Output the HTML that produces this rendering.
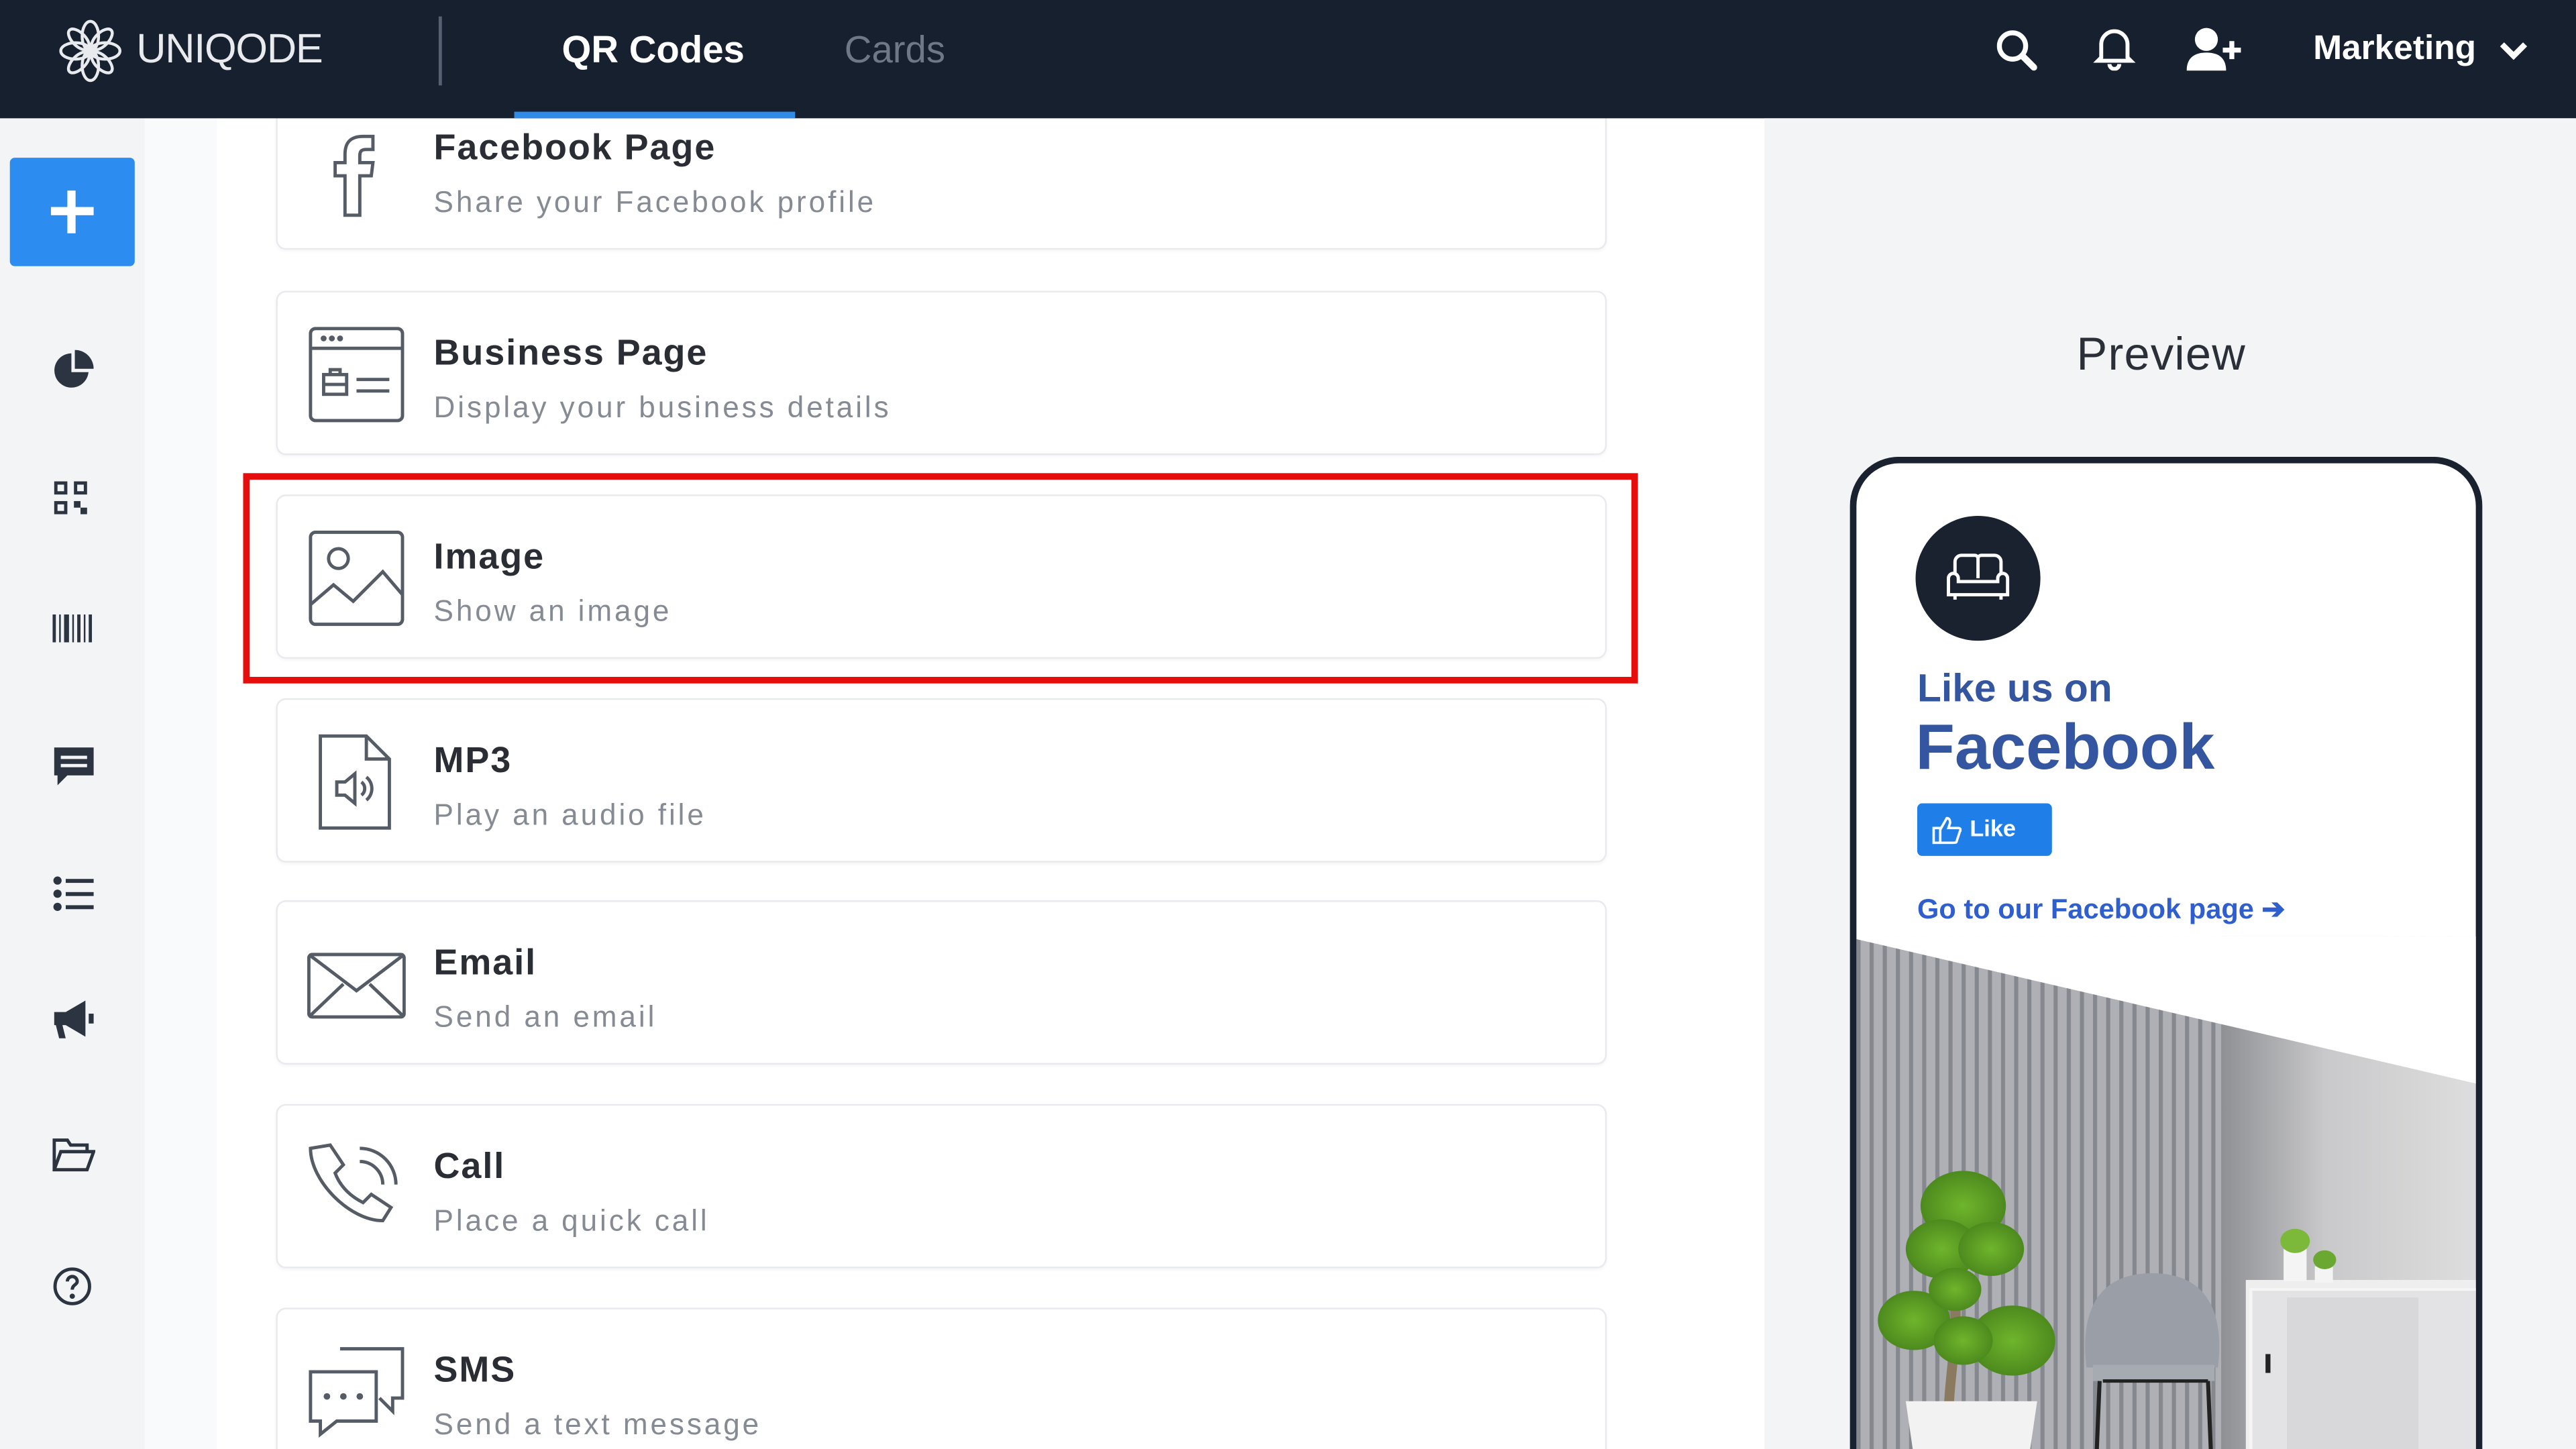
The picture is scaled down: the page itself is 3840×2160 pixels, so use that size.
<!DOCTYPE html>
<html><head><meta charset="utf-8"><style>
*{margin:0;padding:0;box-sizing:border-box}
html,body{width:3840px;height:2160px;overflow:hidden;background:#fff;font-family:"Liberation Sans",sans-serif}
#s{position:absolute;left:0;top:0;width:1568px;height:882px;transform:scale(2.449);transform-origin:0 0;overflow:hidden;background:#fff}
.a{position:absolute}
.hdr{left:0;top:0;width:1568px;height:72px;background:#17202e}
.card{position:absolute;left:168px;width:810px;height:100px;border:1px solid #e8eaee;border-radius:6px;background:#fff;box-shadow:0 1px 2px rgba(0,0,0,.04)}
.card .t{position:absolute;left:95px;top:24px;font-size:22px;font-weight:bold;color:#2a2d33;letter-spacing:.8px}
.card .d{position:absolute;left:95px;top:60px;font-size:18px;color:#858a93;letter-spacing:1.6px}
.card svg{position:absolute;left:18px;top:20px}
.si{position:absolute;left:32px}
</style></head><body><div id="s">
<!-- sidebar -->
<div class="a" style="left:0;top:72px;width:88px;height:810px;background:#f3f4f6"></div>
<div class="a" style="left:88px;top:72px;width:44px;height:810px;background:#f9fafb"></div>
<div class="a" style="left:6px;top:96px;width:76px;height:66px;background:#2d8cf0;border-radius:3px"></div>
<div class="a" style="left:31px;top:126px;width:26px;height:5px;background:#fff"></div>
<div class="a" style="left:41px;top:116px;width:5px;height:26px;background:#fff"></div>
<svg class="si" style="top:213px" width="25" height="25" viewBox="0 0 24 24" fill="#2b3440"><path d="M11 2A10 10 0 1021 13H11z"/><path d="M13 0v11h11A11 11 0 0013 0z"/></svg>
<svg class="si" style="top:292px" width="22" height="22" viewBox="0 0 22 22" fill="#2b3440"><rect x="1" y="1" width="8" height="8"/><rect x="13" y="1" width="8" height="8"/><rect x="1" y="13" width="8" height="8"/><rect x="13" y="13" width="4" height="4"/><rect x="17" y="17" width="4" height="4"/><rect x="3" y="3" width="4" height="4" fill="#f3f4f6"/><rect x="15" y="3" width="4" height="4" fill="#f3f4f6"/><rect x="3" y="15" width="4" height="4" fill="#f3f4f6"/></svg>
<svg class="si" style="top:374px" width="24" height="17" viewBox="0 0 24 17" fill="#2b3440"><rect x="0" y="0" width="2" height="17"/><rect x="4" y="0" width="1" height="17"/><rect x="7" y="0" width="3" height="17"/><rect x="12" y="0" width="1" height="17"/><rect x="15" y="0" width="2" height="17"/><rect x="19" y="0" width="1" height="17"/><rect x="22" y="0" width="2" height="17"/></svg>
<svg class="si" style="top:453px" width="26" height="26" viewBox="0 0 26 26" fill="#2b3440"><path d="M1 2h24v17H9l-6 6v-6H1z"/><rect x="5" y="7" width="16" height="2" fill="#f3f4f6"/><rect x="5" y="12" width="16" height="2" fill="#f3f4f6"/></svg>
<svg class="si" style="top:533px" width="26" height="22" viewBox="0 0 26 22" fill="#2b3440"><circle cx="3" cy="3" r="2.5"/><circle cx="3" cy="11" r="2.5"/><circle cx="3" cy="19" r="2.5"/><rect x="8" y="2" width="17" height="2.4"/><rect x="8" y="10" width="17" height="2.4"/><rect x="8" y="18" width="17" height="2.4"/></svg>
<svg class="si" style="top:608px" width="26" height="26" viewBox="0 0 26 26" fill="#2b3440"><path d="M1 8h7l12-7v22L8 16H6l2 8H4L2 16H1z"/><rect x="22" y="9" width="3" height="6"/></svg>
<svg class="si" style="top:692px" width="26" height="22" viewBox="0 0 26 22" fill="none" stroke="#2b3440" stroke-width="2"><path d="M1 20V2h8l2 3h10v4"/><path d="M1 20l4-11h20l-4 11z"/></svg>
<svg class="si" style="top:771px" width="24" height="24" viewBox="0 0 24 24" fill="none" stroke="#2b3440" stroke-width="2"><circle cx="12" cy="12" r="10.5"/><path d="M9 9a3 3 0 116 0c0 2-3 2-3 5"/><circle cx="12" cy="18" r=".6" fill="#2b3440"/></svg>
<!-- cards -->
<div class="card" style="top:52px"><svg width="60" height="60" viewBox="0 0 60 60" fill="none" stroke="#555c66" stroke-width="2" style="top:22px"><path d="M34 8c-8 0-11 4-11 11v5h-6v8h6v24h9V32h7l1-8h-8v-4c0-3 1-4 4-4h4V8z"/></svg><div class="t">Facebook Page</div><div class="d">Share your Facebook profile</div></div>
<div class="card" style="top:177px"><svg width="60" height="60" viewBox="0 0 60 60" fill="none" stroke="#555c66" stroke-width="2"><rect x="2" y="2" width="56" height="56" rx="3"/><path d="M2 14h56"/><circle cx="10" cy="8" r=".8" fill="#555c66"/><circle cx="15" cy="8" r=".8" fill="#555c66"/><circle cx="20" cy="8" r=".8" fill="#555c66"/><rect x="10" y="30" width="14" height="12"/><path d="M14 30v-3h6v3M10 36h14M30 33h20M30 40h20"/></svg><div class="t">Business Page</div><div class="d">Display your business details</div></div>
<div class="card" style="top:301px"><svg width="60" height="60" viewBox="0 0 60 60" fill="none" stroke="#555c66" stroke-width="2"><rect x="2" y="2" width="56" height="56" rx="3"/><circle cx="19" cy="18" r="6"/><path d="M2 46l14-12 12 10 18-18 12 14"/></svg><div class="t">Image</div><div class="d">Show an image</div></div>
<div class="card" style="top:425px"><svg width="60" height="60" viewBox="0 0 60 60" fill="none" stroke="#555c66" stroke-width="2"><path d="M8 2h28l14 14v42H8z"/><path d="M36 2v14h14"/><path d="M18 30h5l6-5v18l-6-5h-5z"/><path d="M33 30a5 5 0 010 8M36 27a9 9 0 010 14"/></svg><div class="t">MP3</div><div class="d">Play an audio file</div></div>
<div class="card" style="top:548px"><svg width="60" height="60" viewBox="0 0 60 60" fill="none" stroke="#555c66" stroke-width="2"><rect x="1" y="12" width="58" height="38" rx="2"/><path d="M1 12l29 22 29-22M1 50l21-20M59 50L38 30"/></svg><div class="t">Email</div><div class="d">Send an email</div></div>
<div class="card" style="top:672px"><svg width="60" height="60" viewBox="0 0 60 60" fill="none" stroke="#555c66" stroke-width="2"><path d="M14 4l8 12-5 5c3 8 9 14 17 18l5-5 12 8-5 8c-20 0-44-24-44-44z"/><path d="M32 14a14 14 0 0114 14M32 6a22 22 0 0122 22"/></svg><div class="t">Call</div><div class="d">Place a quick call</div></div>
<div class="card" style="top:796px"><svg width="60" height="60" viewBox="0 0 60 60" fill="none" stroke="#555c66" stroke-width="2"><path d="M20 4h38v30h-6v8l-8-8"/><path d="M2 18h40v30H18l-10 8v-8H2z"/><circle cx="12" cy="33" r="1" fill="#555c66"/><circle cx="22" cy="33" r="1" fill="#555c66"/><circle cx="32" cy="33" r="1" fill="#555c66"/></svg><div class="t">SMS</div><div class="d">Send a text message</div></div>
<div class="a" style="left:148px;top:288px;width:849px;height:128px;border:4px solid #e60d0d"></div>
<!-- header -->
<div class="a hdr"></div>
<svg class="a" style="left:36px;top:12px" width="38" height="38" viewBox="0 0 38 38" fill="none" stroke="#e8eaee" stroke-width="1.8">
<ellipse cx="19" cy="10" rx="5" ry="9"/><ellipse cx="19" cy="28" rx="5" ry="9"/><ellipse cx="10" cy="19" rx="9" ry="5"/><ellipse cx="28" cy="19" rx="9" ry="5"/><ellipse cx="12" cy="12" rx="4" ry="8" transform="rotate(-45 12 12)"/><ellipse cx="26" cy="26" rx="4" ry="8" transform="rotate(-45 26 26)"/><ellipse cx="26" cy="12" rx="4" ry="8" transform="rotate(45 26 12)"/><ellipse cx="12" cy="26" rx="4" ry="8" transform="rotate(45 12 26)"/></svg>
<div class="a" style="left:83px;top:16px;font-size:25px;color:#e8eaee;letter-spacing:-.5px">UNIQODE</div>
<div class="a" style="left:267px;top:10px;width:2px;height:42px;background:#556070"></div>
<div class="a" style="left:342px;top:17px;font-size:23px;font-weight:bold;color:#fff">QR Codes</div>
<div class="a" style="left:313px;top:68px;width:171px;height:4px;background:#2f8ae8"></div>
<div class="a" style="left:514px;top:17px;font-size:23px;color:#6f7887">Cards</div>
<svg class="a" style="left:1214px;top:17px" width="28" height="28" viewBox="0 0 28 28"><circle cx="11" cy="11" r="8" fill="none" stroke="#fff" stroke-width="3"/><path d="M17 17l7 7" stroke="#fff" stroke-width="4" stroke-linecap="round"/></svg>
<svg class="a" style="left:1274px;top:15px" width="26" height="28" viewBox="0 0 26 28" fill="none" stroke="#fff" stroke-width="2.4"><path d="M5 20V12a8 8 0 0116 0v8l2 2H3z"/><path d="M10 24a3 3 0 006 0"/></svg>
<svg class="a" style="left:1331px;top:16px" width="34" height="28" viewBox="0 0 34 28" fill="#fff"><circle cx="12" cy="8" r="7"/><path d="M0 27c0-8 5-11 12-11s12 3 12 11z"/><path d="M26 9h3v4h4v3h-4v4h-3v-4h-4v-3h4z"/></svg>
<div class="a" style="left:1408px;top:18px;font-size:21px;font-weight:bold;color:#fff">Marketing</div>
<svg class="a" style="left:1520px;top:23px" width="20" height="16" viewBox="0 0 20 16"><path d="M3 4l7 7 7-7" stroke="#fff" stroke-width="3.5" fill="none"/></svg>
<!-- preview -->
<div class="a" style="left:1074px;top:72px;width:494px;height:810px;background:#f3f4f6"></div>
<div class="a" style="left:1264px;top:200px;font-size:28px;color:#2b3038;letter-spacing:.5px">Preview</div>
<div class="a" style="left:1126px;top:278px;width:385px;height:604px;border:4px solid #1a2230;border-bottom:none;border-radius:30px 30px 0 0;background:#fff;overflow:hidden">
 <div class="a" style="left:36px;top:32px;width:76px;height:76px;border-radius:50%;background:#1a2230"></div>
 <svg class="a" style="left:54px;top:54px" width="40" height="32" viewBox="0 0 40 32" fill="none" stroke="#fff" stroke-width="2"><path d="M6 14V6a4 4 0 014-4h8a2 2 0 012 2v12M20 16V4a2 2 0 012-2h8a4 4 0 014 4v8"/><path d="M2 16a3 3 0 016 0v2h24v-2a3 3 0 016 0v10H2z"/><path d="M6 26v3M34 26v3"/></svg>
 <div class="a" style="left:37px;top:124px;font-size:24px;font-weight:bold;color:#34559f">Like us on</div>
 <div class="a" style="left:36px;top:152px;font-size:39px;font-weight:bold;color:#34559f">Facebook</div>
 <div class="a" style="left:37px;top:207px;width:82px;height:32px;background:#1f7ee8;border-radius:3px"></div>
 <svg class="a" style="left:46px;top:215px" width="18" height="17" viewBox="0 0 18 17" fill="none" stroke="#fff" stroke-width="1.5"><path d="M1 7h4v9H1zM5 8l4-7c2 0 2 2 2 3l-1 3h6c1 0 2 1 1 2l-2 6c0 1-1 1-2 1H5"/></svg>
 <div class="a" style="left:69px;top:214px;font-size:14px;font-weight:bold;color:#fff">Like</div>
 <div class="a" style="left:37px;top:262px;font-size:17px;font-weight:bold;color:#2f5fcf">Go to our Facebook page ➔</div>
 <svg class="a" style="left:0;top:288px" width="380" height="320" viewBox="0 0 380 320">
  <defs><pattern id="p" width="8" height="10" patternUnits="userSpaceOnUse"><rect width="8" height="10" fill="#aeb0b5"/><rect width="2.5" height="10" fill="#85888e"/></pattern>
  <linearGradient id="g" x1="0" x2="1"><stop offset="0" stop-color="#8f9094"/><stop offset=".4" stop-color="#c9c9cb"/><stop offset="1" stop-color="#dedede"/></linearGradient>
  <radialGradient id="lf"><stop offset="0" stop-color="#6fb52c"/><stop offset="1" stop-color="#4d8a1e"/></radialGradient></defs>
  <rect width="380" height="320" fill="url(#p)"/>
  <rect x="222" width="158" height="320" fill="url(#g)"/>
  <g transform="scale(1 0.82)">
  <path d="M0 0H380V110L0 2z" fill="#fff"/>
  <rect x="237" y="255" width="143" height="160" fill="#eeeeef"/>
  <rect x="240" y="262" width="140" height="150" fill="#e3e3e5" stroke="#f5f5f5" stroke-width="2"/>
  <rect x="262" y="268" width="80" height="140" fill="#d8d8db"/>
  <rect x="249" y="310" width="3" height="14" fill="#222"/>
  <path d="M260 232h14v24h-14z" fill="#f4f4f4"/><circle cx="267" cy="226" r="9" fill="#7cb83a"/>
  <path d="M279 245h11v12h-11z" fill="#f4f4f4"/><circle cx="285" cy="240" r="7" fill="#6aa831"/>
  <path d="M140 320c-4-40 6-70 40-70s44 30 40 70z" fill="#9a9ea6"/>
  <path d="M144 318h74v12h-74z" fill="#a6aab1"/>
  <path d="M148 330l-2 60M214 330l2 60M150 330h64" stroke="#222" stroke-width="2.5"/>
  <path d="M56 360c0-40 10-80 0-120" stroke="#8a7a60" stroke-width="6" fill="none"/>
  <circle cx="65" cy="200" r="26" fill="url(#lf)"/><circle cx="52" cy="232" r="22" fill="url(#lf)"/><circle cx="82" cy="232" r="20" fill="url(#lf)"/>
  <circle cx="35" cy="285" r="22" fill="url(#lf)"/><circle cx="95" cy="300" r="26" fill="url(#lf)"/><circle cx="65" cy="300" r="18" fill="url(#lf)"/><circle cx="60" cy="262" r="16" fill="url(#lf)"/>
  <path d="M30 345h80l-6 50H36z" fill="#f2f2f2"/>
  </g>
 </svg>
</div>
</div></body></html>
